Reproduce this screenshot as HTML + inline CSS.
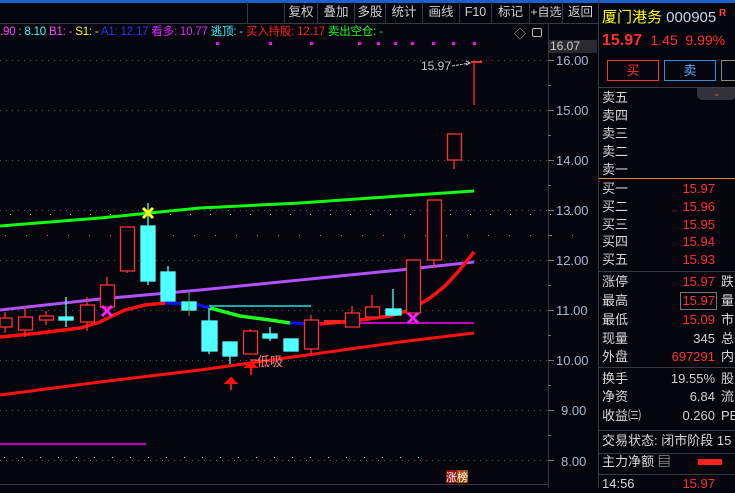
<!DOCTYPE html>
<html><head><meta charset="utf-8"><style>
*{margin:0;padding:0;box-sizing:border-box}
body{width:735px;height:488px;background:#05050d;overflow:hidden;position:relative;font-family:"Liberation Sans","Noto Sans CJK SC",sans-serif;color:#c8c8c8}
.a{position:absolute;white-space:nowrap}
.tb{position:absolute;top:2px;height:21px;border-left:1px solid #3a3a44;color:#d0d0d0;font-size:12.5px;line-height:21px;text-align:center;white-space:nowrap;overflow:hidden}
.rp{position:absolute;left:598px;top:0;width:137px;height:488px;border-left:1px solid #3a3a44;font-size:13px}
.r{position:absolute;left:3px;height:18px;line-height:18px;color:#d8d8d8;white-space:nowrap}
.v{position:absolute;right:20px;color:#ff3030;text-align:right}
.hl{position:absolute;left:0;width:137px;height:1px;background:#3a3a44}
</style></head><body>
<div class="a" style="left:0;top:0;width:735px;height:3px;background:#1e5fd0"></div>
<div class="a" style="left:0;top:23px;width:598px;height:1px;background:#3a3a44"></div>
<div class="tb" style="left:247px;width:37px;border-left:1px solid #3a3a44"></div>
<div class="tb" style="left:284px;width:33px">复权</div>
<div class="tb" style="left:317px;width:37px">叠加</div>
<div class="tb" style="left:354px;width:31px">多股</div>
<div class="tb" style="left:385px;width:37px">统计</div>
<div class="tb" style="left:422px;width:37px">画线</div>
<div class="tb" style="left:459px;width:32px">F10</div>
<div class="tb" style="left:491px;width:38px">标记</div>
<div class="tb" style="left:529px;width:33px;font-size:12px">+自选</div>
<div class="tb" style="left:562px;width:36px">返回</div>
<div class="a" style="left:0;top:24px;font-size:11.5px;line-height:16px;letter-spacing:-0.2px">
<span style="color:#ff44ff">.90</span><span style="color:#40ffff"> : 8.10 </span><span style="color:#ff44ff">B1: - </span><span style="color:#ffff00">S1: - </span><span style="color:#3030ff">A1: 12.17 </span><span style="color:#e020ff">看多: 10.77 </span><span style="color:#40ffff">逃顶: - </span><span style="color:#ff2020">买入持股: 12.17 </span><span style="color:#20ff20">卖出空仓: -</span></div>
<div class="a" style="left:514px;top:25px;font-size:12px;color:#bbb">◇</div>
<div class="a" style="left:532px;top:28px;width:10px;height:9px;border:1px solid #bbb;border-radius:2px"></div>
<div class="a" style="left:548px;top:40px;width:49px;height:13px;background:#2a2a30;color:#d0d0d0;font-size:12px;line-height:13px;padding-left:2px">16.07</div>
<svg class="a" style="left:0;top:0" width="598" height="488">
<g stroke="#555" stroke-dasharray="1,5" stroke-width="1">
<line x1="0" y1="60.5" x2="548" y2="60.5"/><line x1="0" y1="110.5" x2="548" y2="110.5"/><line x1="0" y1="160.5" x2="548" y2="160.5"/><line x1="0" y1="210.5" x2="548" y2="210.5"/><line x1="0" y1="260.5" x2="548" y2="260.5"/><line x1="0" y1="310.5" x2="548" y2="310.5"/><line x1="0" y1="360.5" x2="548" y2="360.5"/><line x1="0" y1="410.5" x2="548" y2="410.5"/><line x1="0" y1="460.5" x2="548" y2="460.5"/></g>
<g stroke="#ffff00" stroke-dasharray="1,19"><line x1="10" y1="214.5" x2="590" y2="214.5"/></g>
<g stroke="#ff7020" stroke-dasharray="1,20"><line x1="5" y1="235.5" x2="590" y2="235.5"/></g>
<g stroke="#40ffff" stroke-dasharray="1,17"><line x1="4" y1="457.5" x2="420" y2="457.5"/></g>
<g fill="#ff00ff"><rect x="216" y="42" width="3" height="3"/><rect x="269" y="42" width="3" height="3"/><rect x="310" y="42" width="3" height="3"/><rect x="358" y="42" width="3" height="3"/><rect x="377" y="42" width="3" height="3"/><rect x="394" y="42" width="3" height="3"/><rect x="411" y="42" width="3" height="3"/><rect x="432" y="42" width="3" height="3"/><rect x="452" y="42" width="3" height="3"/><rect x="473" y="42" width="3" height="3"/></g>
<line x1="548.5" y1="24" x2="548.5" y2="488" stroke="#3a3a44"/>
<g stroke="#777"><line x1="548" y1="60.5" x2="554" y2="60.5"/><line x1="548" y1="110.5" x2="554" y2="110.5"/><line x1="548" y1="160.5" x2="554" y2="160.5"/><line x1="548" y1="210.5" x2="554" y2="210.5"/><line x1="548" y1="260.5" x2="554" y2="260.5"/><line x1="548" y1="310.5" x2="554" y2="310.5"/><line x1="548" y1="360.5" x2="554" y2="360.5"/><line x1="548" y1="410.5" x2="554" y2="410.5"/><line x1="548" y1="460.5" x2="554" y2="460.5"/>
<line x1="548" y1="85.5" x2="551" y2="85.5"/><line x1="548" y1="135.5" x2="551" y2="135.5"/><line x1="548" y1="185.5" x2="551" y2="185.5"/><line x1="548" y1="235.5" x2="551" y2="235.5"/><line x1="548" y1="285.5" x2="551" y2="285.5"/><line x1="548" y1="335.5" x2="551" y2="335.5"/><line x1="548" y1="385.5" x2="551" y2="385.5"/><line x1="548" y1="435.5" x2="551" y2="435.5"/></g>
<g font-size="13" fill="#a8b8d0" font-family="Liberation Sans"><text x="556" y="65">16.00</text><text x="556" y="115">15.00</text><text x="556" y="165">14.00</text><text x="556" y="215">13.00</text><text x="556" y="265">12.00</text><text x="556" y="315">11.00</text><text x="556" y="365">10.00</text><text x="561" y="415">9.00</text><text x="561" y="466">8.00</text></g>
<polyline points="0,226 100,218 200,208 300,203 400,196 474,191" stroke="#10ff10" stroke-width="3" fill="none"/>
<polyline points="0,310 100,299 200,290 300,280 400,270 474,262" stroke="#b050ff" stroke-width="3" fill="none"/>
<polyline points="0,395 100,382 200,370 300,356 400,342 474,333" stroke="#ff1010" stroke-width="3" fill="none"/>
<line x1="0" y1="444" x2="146" y2="444" stroke="#ff00ff" stroke-width="1.5"/>
<line x1="290" y1="323" x2="474" y2="323" stroke="#ff00ff" stroke-width="1.5"/>
<line x1="209" y1="306" x2="311" y2="306" stroke="#20e0e0" stroke-width="1.5"/>
<polyline points="0,337 40,333 80,328 100,322 112,316 125,310 145,305 165,303" stroke="#ff1010" stroke-width="3.5" fill="none"/>
<polyline points="165,303 195,304 210,308" stroke="#1010ff" stroke-width="3" fill="none"/>
<polyline points="210,308 240,316 270,320 290,323" stroke="#20ff20" stroke-width="3.5" fill="none"/>
<polyline points="290,323 320,324" stroke="#1010ff" stroke-width="3" fill="none"/>
<polyline points="320,324 360,320 390,316 410,310 430,298 445,286 458,272 474,252" stroke="#ff1010" stroke-width="3.5" fill="none"/>
<g stroke="#ff3030" fill="none" stroke-width="1.3">
<line x1="5" y1="312" x2="5" y2="333"/><rect x="0" y="318" width="12" height="9" fill="#05050d"/>
<line x1="25" y1="307" x2="25" y2="337"/><rect x="18.5" y="317" width="14" height="13" fill="#05050d"/>
<line x1="46" y1="311" x2="46" y2="325"/><rect x="39.5" y="316" width="14" height="4" fill="#05050d"/>
<line x1="87" y1="297" x2="87" y2="331"/><rect x="80.5" y="305" width="14" height="17" fill="#05050d"/>
<line x1="107" y1="277" x2="107" y2="285"/><rect x="100.5" y="285" width="14" height="22" fill="#05050d"/>
<line x1="127" y1="271" x2="127" y2="273"/><rect x="120.5" y="227" width="14" height="44" fill="#05050d"/>
<line x1="250" y1="329" x2="250" y2="331"/><rect x="243.5" y="331" width="14" height="23" fill="#05050d"/>
<line x1="311" y1="315" x2="311" y2="354"/><rect x="304.5" y="320" width="14" height="29" fill="#05050d"/>
<line x1="352" y1="306" x2="352" y2="313"/><rect x="345.5" y="313" width="14" height="14" fill="#05050d"/>
<line x1="372" y1="295" x2="372" y2="307"/><rect x="365.5" y="307" width="14" height="10" fill="#05050d"/>
<rect x="406.5" y="260" width="14" height="53" fill="#05050d"/>
<line x1="434" y1="260" x2="434" y2="268"/><rect x="427.5" y="200" width="14" height="60" fill="#05050d"/>
<line x1="454" y1="160" x2="454" y2="169"/><rect x="447.5" y="134" width="14" height="26" fill="#05050d"/>
<line x1="474" y1="62" x2="474" y2="105"/><line x1="471" y1="62" x2="482" y2="62" stroke-width="2"/>
</g>
<rect x="324" y="320" width="16" height="4" fill="#ff2020"/>
<g stroke="#50ffff" fill="#50ffff" stroke-width="1.3">
<line x1="66" y1="297" x2="66" y2="327"/><rect x="59" y="317" width="14" height="3"/>
<line x1="148" y1="203" x2="148" y2="285"/><rect x="141" y="226" width="14" height="55"/>
<line x1="168" y1="266" x2="168" y2="272"/><rect x="161" y="272" width="14" height="29"/>
<rect x="182" y="302" width="14" height="8"/>
<line x1="209" y1="308" x2="209" y2="354"/><rect x="202" y="321" width="15" height="30"/>
<line x1="230" y1="356" x2="230" y2="364"/><rect x="223" y="342" width="14" height="14"/>
<line x1="270" y1="327" x2="270" y2="341"/><rect x="263" y="334" width="14" height="4"/>
<rect x="284" y="339" width="14" height="12"/>
<line x1="393" y1="289" x2="393" y2="315"/><rect x="386" y="309" width="15" height="6"/>
</g>
<line x1="189" y1="292" x2="189" y2="316" stroke="#30c030" stroke-width="1"/>
<g stroke-width="3"><path d="M143,208 L153,218 M153,208 L143,218" stroke="#ffff20"/><path d="M102,306 L112,316 M112,306 L102,316" stroke="#ff20ff"/><path d="M408,313 L418,323 M418,313 L408,323" stroke="#ff20ff"/></g>
<g fill="#ff1010" stroke="#ff1010" stroke-width="2"><path d="M231,378 l-5,5 h10z"/><line x1="231" y1="382" x2="231" y2="390"/><path d="M251,362 l-5,5 h10z"/><line x1="251" y1="366" x2="251" y2="375"/></g>
<text x="257" y="366" font-size="13" fill="#ff8080" font-family="Liberation Sans,Noto Sans CJK SC">低吸</text>
<line x1="250" y1="360" x2="257" y2="360" stroke="#ff8080"/>
<text x="421" y="70" font-size="12" fill="#c0c8d8" font-family="Liberation Sans">15.97</text>
<path d="M452,66 L470,63" stroke="#ccc" stroke-dasharray="3,1"/><path d="M466,61 l4,2 -4,2" stroke="#ccc" fill="none"/>
<rect x="446" y="470" width="11" height="13" fill="#901010"/><rect x="457" y="470" width="11" height="13" fill="#a05000"/>
<text x="446" y="481" font-size="11" fill="#fff" font-family="Noto Sans CJK SC">涨榜</text>
<line x1="0" y1="484.5" x2="548" y2="484.5" stroke="#3a3a44"/>
</svg>
<div class="rp">
<div class="a" style="left:3px;top:6px;font-size:15px;color:#ffff20">厦门港务 <span style="color:#c8d8e8;font-size:15px">000905</span><sup style="color:#ff4040;font-size:10px;font-weight:bold"> R</sup></div>
<div class="a" style="left:3px;top:32px;font-size:16px;color:#ff3030"><b>15.97</b> <span style="font-size:14px">&nbsp;1.45&nbsp; 9.99%</span></div>
<div class="a" style="left:8px;top:60px;width:52px;height:21px;border:1px solid #ff3030;color:#ff3030;text-align:center;line-height:19px">买</div>
<div class="a" style="left:65px;top:60px;width:52px;height:21px;border:1px solid #3090e0;color:#60b0ff;text-align:center;line-height:19px">卖</div>
<div class="a" style="left:122px;top:60px;width:20px;height:21px;border:1px solid #888"></div>
<div class="hl" style="top:87px"></div>
<div class="a" style="left:98px;top:88px;width:39px;height:12px;background:#33333c;border-radius:0 0 6px 6px;color:#ff4040;font-size:9px;text-align:center;line-height:10px">⌄</div>
<div class="r" style="top:89px">卖五</div><div class="r" style="top:107px">卖四</div><div class="r" style="top:125px">卖三</div><div class="r" style="top:143px">卖二</div><div class="r" style="top:161px">卖一</div>
<div class="hl" style="top:178px;background:#e08a20"></div>
<div class="r" style="top:180px">买一</div><div class="v" style="top:180px;line-height:18px">15.97</div>
<div class="r" style="top:198px">买二</div><div class="v" style="top:198px;line-height:18px">15.96</div>
<div class="r" style="top:216px">买三</div><div class="v" style="top:216px;line-height:18px">15.95</div>
<div class="r" style="top:233px">买四</div><div class="v" style="top:233px;line-height:18px">15.94</div>
<div class="r" style="top:251px">买五</div><div class="v" style="top:251px;line-height:18px">15.93</div>
<div class="hl" style="top:271px"></div>
<div class="r" style="top:273px">涨停</div><div class="v" style="top:273px;line-height:18px">15.97</div><div class="r" style="left:122px;top:273px">跌</div>
<div class="r" style="top:292px">最高</div><div class="v" style="top:292px;line-height:16px;border:1px solid #777;right:18px;padding:0 1px">15.97</div><div class="r" style="left:122px;top:292px">量</div>
<div class="r" style="top:311px">最低</div><div class="v" style="top:311px;line-height:18px">15.09</div><div class="r" style="left:122px;top:311px">市</div>
<div class="r" style="top:330px">现量</div><div class="v" style="top:330px;line-height:18px;color:#d0d0d0">345</div><div class="r" style="left:122px;top:330px">总</div>
<div class="r" style="top:348px">外盘</div><div class="v" style="top:348px;line-height:18px">697291</div><div class="r" style="left:122px;top:348px">内</div>
<div class="hl" style="top:367px"></div>
<div class="r" style="top:370px">换手</div><div class="v" style="top:370px;line-height:18px;color:#d0d0d0">19.55%</div><div class="r" style="left:122px;top:370px">股</div>
<div class="r" style="top:388px">净资</div><div class="v" style="top:388px;line-height:18px;color:#d0d0d0">6.84</div><div class="r" style="left:122px;top:388px">流</div>
<div class="r" style="top:407px">收益㈢</div><div class="v" style="top:407px;line-height:18px;color:#d0d0d0">0.260</div><div class="r" style="left:122px;top:407px">PE</div>
<div class="hl" style="top:430px"></div>
<div class="r" style="top:432px">交易状态: 闭市阶段 15</div>
<div class="hl" style="top:453px"></div>
<div class="r" style="top:453px">主力净额 ▤</div>
<div class="a" style="left:99px;top:459px;width:24px;height:6px;background:#ff2020"></div>
<div class="hl" style="top:474px"></div>
<div class="r" style="top:475px">14:56</div><div class="v" style="top:475px;line-height:18px">15.97</div>
</div>
</body></html>
